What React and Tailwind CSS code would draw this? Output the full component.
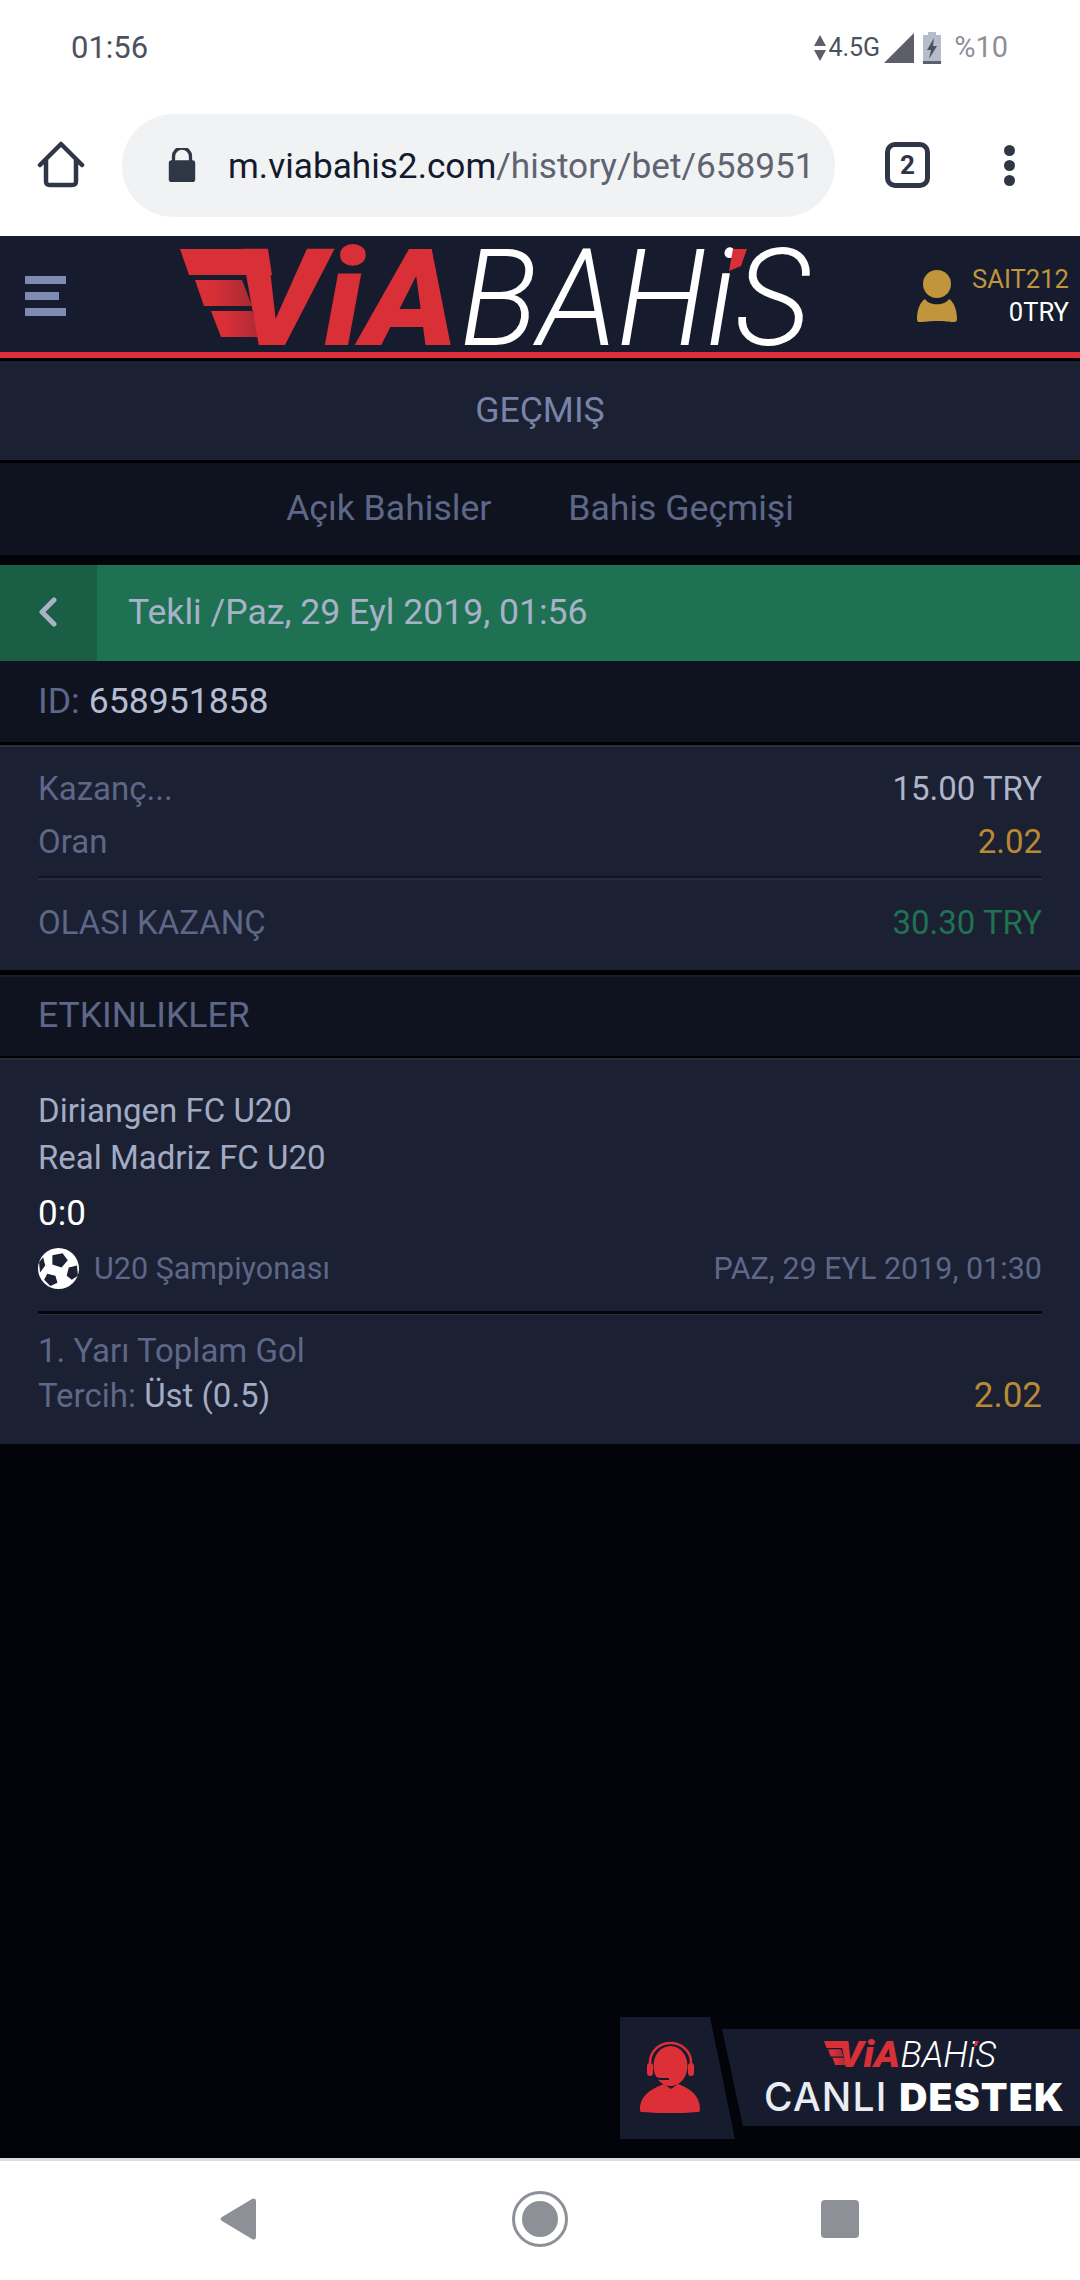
import React from "react";

const roboto = { fontFamily: "Roboto, sans-serif" };

function Logo({ className }) {
  return (
    <svg viewBox="180 249 630 96" overflow="visible" className={className}>
      <defs>
        <linearGradient id="wing" x1="0" x2="1" y1="0" y2="0">
          <stop offset="0.3" stopColor="#d92f37" />
          <stop offset="1" stopColor="#a82a33" />
        </linearGradient>
      </defs>
      <polygon points="180,249 268,249 272,275 189,275" fill="#d92f37" />
      <polygon points="195,280 242,280 252,306 204,306" fill="url(#wing)" />
      <polygon points="211,311 252,311 262,337 221,337" fill="url(#wing)" />
      <text x="232" y="345" fontFamily="Roboto" fontWeight="900" fontStyle="italic" fontSize="135" textLength="226" lengthAdjust="spacingAndGlyphs" fill="#d92f37">ViA</text>
      <text x="460" y="345" fontFamily="Roboto" fontWeight="300" fontStyle="italic" fontSize="135" textLength="350" lengthAdjust="spacingAndGlyphs" fill="#fff">BAHiS</text>
      <polygon points="733,249 747,249 741,266 729,271" fill="#d92f37" />
    </svg>
  );
}

function Row({ left, right, leftClass, rightClass }) {
  return (
    <div className="flex items-center justify-between h-[53px]">
      <span className={leftClass}>{left}</span>
      <span className={rightClass}>{right}</span>
    </div>
  );
}

export default function App() {
  return (
    <div className="relative w-[1080px] h-[2280px] flex flex-col bg-[#03040a] overflow-hidden text-[33px]" style={roboto}>
      {/* status bar */}
      <div className="h-[96px] bg-white flex items-center justify-between pl-[71px] pr-[72px] text-[#4c5160]">
        <span className="text-[31px]">01:56</span>
        <div className="flex items-center">
          <svg viewBox="0 0 12 26" className="w-[12px] h-[26px]" fill="#5c5f6a">
            <polygon points="6,0 12,11 0,11" />
            <polygon points="0,15 12,15 6,26" />
          </svg>
          <span className="text-[25px] ml-[2px]">4.5G</span>
          <svg viewBox="0 0 30 30" className="w-[30px] h-[30px] ml-[4px]" fill="#5c5f6a">
            <polygon points="30,0 30,30 0,30" />
          </svg>
          <svg viewBox="0 0 18 32" className="w-[18px] h-[32px] ml-[9px]">
            <path d="M5 0h8v3h5v29H0V3h5z" fill="#b7bccb" />
            <rect x="0" y="29" width="18" height="3" fill="#5c5f6a" />
            <polygon points="11,6 4,18 8,18 6,27 14,14 10,14" fill="#4c5160" />
          </svg>
          <span className="text-[29px] ml-[13px] text-[#8e9097]">%10</span>
        </div>
      </div>

      {/* browser bar */}
      <div className="h-[140px] bg-white flex items-center">
        <svg viewBox="0 0 48 48" className="w-[48px] h-[48px] ml-[37px] -mt-[3px]" fill="none" stroke="#2f3646" strokeWidth="4.5" strokeLinejoin="round" strokeLinecap="round">
          <path d="M3 24 24 3l21 21M9 19v21c0 3 1 4 4 4h22c3 0 4-1 4-4V19" />
        </svg>
        <div className="ml-[37px] -mt-[2px] w-[713px] h-[103px] rounded-full bg-[#f1f2f4] flex items-center">
          <svg viewBox="0 0 28 36" className="w-[28px] h-[34px] ml-[46px]" fill="#2f3646">
            <path d="M5 14V9a9 9 0 0 1 18 0v5" fill="none" stroke="#2f3646" strokeWidth="3.5" />
            <rect x="0" y="13" width="28" height="23" rx="3" />
          </svg>
          <span className="ml-[32px] mt-[2px] text-[35.2px] text-[#131a2b] whitespace-nowrap">
            m.viabahis2.com<span className="text-[#5e6472]">/history/bet/658951</span>
          </span>
        </div>
        <div className="ml-[50px] -mt-[2px] w-[45px] h-[46px] rounded-[10px] border-[5px] border-[#2f3646] flex items-center justify-center text-[26px] font-bold text-[#2f3646]">2</div>
        <div className="ml-[74px] -mt-[2px] flex flex-col gap-[4px]">
          <span className="w-[11px] h-[11px] rounded-full bg-[#2f3646]" />
          <span className="w-[11px] h-[11px] rounded-full bg-[#2f3646]" />
          <span className="w-[11px] h-[11px] rounded-full bg-[#2f3646]" />
        </div>
      </div>

      {/* site header */}
      <div className="h-[116px] bg-[#161c2d] relative flex items-center">
        <div className="ml-[25px] mt-[4px] flex flex-col gap-[8px]">
          <span className="block w-[41px] h-[8px] bg-[#7f8bb3]" />
          <span className="block w-[34px] h-[8px] bg-[#7f8bb3]" />
          <span className="block w-[41px] h-[8px] bg-[#7f8bb3]" />
        </div>
        <Logo className="w-[630px] h-[96px] ml-[114px] mt-[6px]" />
        <svg viewBox="0 0 40 52" className="w-[40px] h-[52px] ml-[107px] mt-[4px]" fill="#c1953c">
          <circle cx="20" cy="14" r="14" />
          <path d="M8 29c4 7 20 7 24 0 5 3 8 11 8 20 0 3-2 3-4 3-4 0-8-1-16-1s-12 1-16 1c-2 0-4 0-4-3 0-9 3-17 8-20z" />
        </svg>
        <div className="absolute right-[11px] top-[27px] text-right text-[25.6px] leading-[33px]">
          <div className="text-[#c1953c]">SAIT212</div>
          <div className="text-white">0TRY</div>
        </div>
      </div>
      <div className="h-[6px] bg-[#dc2f37]" />
      <div className="h-[3px] bg-black" />

      <div className="h-[99px] bg-[#1b2032] flex items-center justify-center text-[#7883a8] text-[35.6px] -mt-0">GEÇMIŞ</div>
      <div className="h-[3px] bg-black" />

      <div className="h-[92px] bg-[#0f1320] flex items-center justify-center gap-[77px] text-[35.6px] text-[#5d6788]">
        <span>Açık Bahisler</span>
        <span>Bahis Geçmişi</span>
      </div>
      <div className="h-[10px] bg-[#03040a]" />

      {/* bet title */}
      <div className="h-[96px] bg-[#1e7152] flex items-center">
        <div className="w-[97px] h-full bg-[#1a5f45] flex items-center justify-center">
          <svg viewBox="0 0 18 30" className="w-[18px] h-[30px] mr-[2px] -mt-[3px]" fill="none" stroke="#a9b2c6" strokeWidth="5" strokeLinecap="round" strokeLinejoin="round">
            <path d="M15 3 3 15l12 12" />
          </svg>
        </div>
        <span className="ml-[31px] text-[35.6px] text-[#a9b1c8]">Tekli /Paz, 29 Eyl 2019, 01:56</span>
      </div>

      <div className="h-[81px] bg-[#0f1320] flex items-center pl-[38px] text-[35.6px]">
        <span className="text-[#5d6788]">ID:</span>
        <span className="ml-[9px] text-[#b6bdd2]">658951858</span>
      </div>
      <div className="h-[3px] bg-black" />

      {/* stake and odds */}
      <div className="h-[225px] bg-[#1b2032] px-[38px] pt-[15px] border-t-[2px] border-[#2a3042]">
        <Row left="Kazanç..." right="15.00 TRY" leftClass="text-[#5d6788]" rightClass="text-[#aeb5cb]" />
        <Row left="Oran" right="2.02" leftClass="text-[#5d6788]" rightClass="text-[#b98a35]" />
        <div className="h-[4px] mt-[8px] bg-[#10141f] border-b-[2px] border-[#262b3e]" />
        <div className="mt-[16px]">
          <Row left="OLASI KAZANÇ" right="30.30 TRY" leftClass="text-[#5d6788]" rightClass="text-[#1f7350]" />
        </div>
      </div>
      <div className="h-[5px] bg-black" />

      <div className="h-[81px] bg-[#0f1320] flex items-center pl-[38px] pb-[2px] text-[35.6px] text-[#5d6788] border-t-[2px] border-[#1a1e2c]">ETKINLIKLER</div>
      <div className="h-[2px] bg-black" />

      {/* event */}
      <div className="h-[386px] bg-[#1b2032] border-t-[2px] border-[#262b3e] px-[38px] pt-[27px]">
        <div className="text-[#a2abc4] leading-[47px]">Diriangen FC U20</div>
        <div className="text-[#a2abc4] leading-[47px]">Real Madriz FC U20</div>
        <div className="text-white leading-[47px] mt-[9px] text-[35px]">0:0</div>
        <div className="flex items-center mt-[9px] justify-between text-[#5d6788] text-[30.5px]">
          <div className="flex items-center">
            <svg viewBox="0 0 40 40" className="w-[41px] h-[41px]">
              <circle cx="20" cy="20" r="20" fill="#fff" />
              <polygon points="14,7 24,5 29,12 23,19 14,16" fill="#1b2032" />
              <polygon points="30,19 38,17 39,27 33,31 28,27" fill="#1b2032" />
              <polygon points="9,25 17,27 19,34 12,37 6,31" fill="#1b2032" />
              <polygon points="1,14 5,9 7,17 2,24" fill="#1b2032" />
            </svg>
            <span className="ml-[15px]">U20 Şampiyonası</span>
          </div>
          <span>PAZ, 29 EYL 2019, 01:30</span>
        </div>
        <div className="h-[4px] mt-[19px] bg-[#050609] border-b-[1px] border-[#2a3042]" />
        <div className="mt-[13px] leading-[45px] text-[#5d6788]">1. Yarı Toplam Gol</div>
        <div className="flex justify-between items-center leading-[45px]">
          <span className="text-[#5d6788]">Tercih: <span className="text-[#a2abc4]">Üst (0.5)</span></span>
          <span className="text-[#b98a35] text-[35px]">2.02</span>
        </div>
      </div>

      <div className="flex-1" />

      {/* android nav */}
      <div className="h-[122px] bg-white border-t-[3px] border-[#dcdcdc] flex items-center relative">
        <svg viewBox="0 0 36 42" className="w-[36px] h-[42px] ml-[220px] -mt-[3px]" fill="#8e9097">
          <path d="M36 3v36c0 3-3 3-4 2L2 23c-2-1-2-3 0-4L32 1c1-1 4-1 4 2z" />
        </svg>
        <svg viewBox="0 0 56 56" className="w-[56px] h-[56px] ml-[256px] -mt-[3px]">
          <circle cx="28" cy="28" r="26.5" fill="none" stroke="#8e9097" strokeWidth="3" />
          <circle cx="28" cy="28" r="18" fill="#8e9097" />
        </svg>
        <div className="w-[38px] h-[38px] rounded-[4px] bg-[#8e9097] ml-[253px] -mt-[3px]" />
      </div>

      {/* live support widget */}
      <div className="absolute left-[620px] top-[2017px] w-[460px] h-[122px]">
        <svg viewBox="0 0 460 122" className="absolute inset-0 w-[460px] h-[122px]">
          <polygon points="0,0 90,0 115,122 0,122" fill="#161c2d" />
          <polygon points="102,12 460,12 460,109 123,109" fill="#161c2d" />
          <g fill="#dc2f37">
            <ellipse cx="50.5" cy="49" rx="17" ry="20" />
            <path d="M20 92c0-14 13-21 24-25l7 5 7-5c11 4 22 11 22 25 0 3-1 3-3 3-9 1-17 1-26 1s-18 0-28-1c-2 0-3 0-3-3z" />
            <rect x="27" y="46" width="6" height="13" rx="3" />
            <rect x="68" y="46" width="6" height="13" rx="3" />
          </g>
          <path d="M30 48v-3a20.5 19 0 0 1 41 0v3" fill="none" stroke="#dc2f37" strokeWidth="2.5" />
          <path d="M33 58c2 3 5 4 8 4h8" fill="none" stroke="#161c2d" strokeWidth="2" />
        </svg>
        <Logo className="absolute left-[204px] top-[23px] w-[172px] h-[28px]" />
        <div className="absolute left-[144px] top-[60px] whitespace-nowrap text-[39px] leading-[40px] tracking-[1.2px] font-medium text-[#e9ecf3]" style={{ fontFamily: "Inter, sans-serif" }}>
          CANLI <span className="font-black text-white">DESTEK</span>
        </div>
      </div>
    </div>
  );
}
